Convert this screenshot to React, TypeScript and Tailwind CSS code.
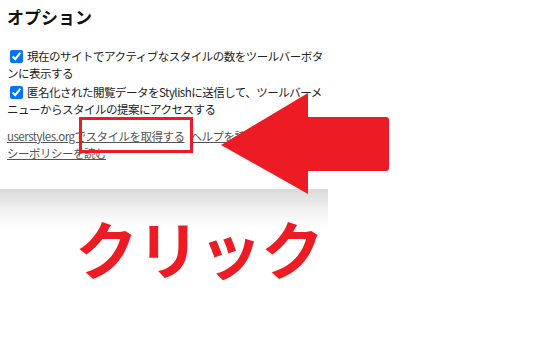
import React from 'react';

const jp = { fontFamily: '"Noto Sans CJK JP", "Noto Sans", sans-serif' };

function Check() {
  return (
    <input
      type="checkbox"
      defaultChecked
      readOnly
      className="inline-block w-[13px] h-[13px] ml-[3px] mr-[4px] align-[-2px] accent-[#0075ff]"
    />
  );
}

export default function App() {
  return (
    <div className="relative w-[550px] h-[350px] bg-white overflow-hidden" style={jp}>
      {/* Options panel */}
      <div className="w-[328px] bg-white px-[7px] pt-[5px] pb-[27px] text-[11.5px] tracking-[-0.5px] leading-[17px] text-[#222]">
        <h2 className="text-[17px] font-bold leading-[24px] tracking-normal text-[#111] mb-[19px]">オプション</h2>

        <p className="whitespace-nowrap">
          <Check />現在のサイトでアクティブなスタイルの数をツールバーボタ
          <br />
          ンに表示する
        </p>
        <p className="whitespace-nowrap mt-[2px]">
          <Check />匿名化された閲覧データをStylishに送信して、ツールバーメ
          <br />
          ニューからスタイルの提案にアクセスする
        </p>

        <p className="whitespace-nowrap mt-[10px] text-[#555]">
          <a className="underline">userstyles.orgでスタイルを取得する</a>{' '}
          <a className="underline ml-[4px]">ヘルプを読む</a>{' '}
          <a className="underline">プライバ</a>
          <br />
          <a className="underline">シーポリシーを読む</a>
        </p>
      </div>
      {/* panel shadow */}
      <div className="w-[328px] h-[38px] bg-gradient-to-b from-[#d9d9d9] via-[#f0f0f0] to-white" />

      {/* highlight box */}
      <div className="absolute left-[79px] top-[117px] w-[114px] h-[36px] border-[3px] border-[#ed1c24]" />

      {/* arrow */}
      <svg className="absolute left-0 top-0" width="550" height="350" viewBox="0 0 550 350">
        <path
          d="M221 145 L308 93 L308 117 L386 117 Q389 117 389 120 L389 168 Q389 171 386 171 L308 171 L308 194 Z"
          fill="#ed1c24"
        />
      </svg>

      {/* label */}
      <div className="absolute left-[75px] top-[215px] text-[63px] font-bold leading-none tracking-[-1px] text-[#ed1c24]">
        クリック
      </div>
    </div>
  );
}
